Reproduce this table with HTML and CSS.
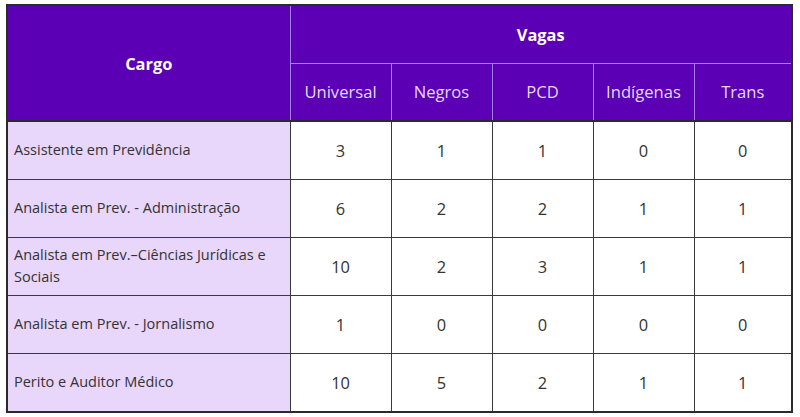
FILE: index.html
```html
<!DOCTYPE html>
<html lang="pt-BR">
<head>
<meta charset="utf-8">
<title>Vagas</title>
<link rel="stylesheet" href="styles.css">
</head>
<body>
<div class="wrap">
<table class="vagas">
  <colgroup>
    <col class="c-cargo">
    <col class="c-num"><col class="c-num"><col class="c-num"><col class="c-num"><col class="c-last">
  </colgroup>
  <thead>
    <tr class="h1">
      <th rowspan="2" class="th-main">Cargo</th>
      <th colspan="5" class="th-main">Vagas</th>
    </tr>
    <tr class="h2">
      <th>Universal</th>
      <th>Negros</th>
      <th>PCD</th>
      <th>Indígenas</th>
      <th>Trans</th>
    </tr>
  </thead>
  <tbody>
    <tr><td class="cargo">Assistente em Previdência</td><td>3</td><td>1</td><td>1</td><td>0</td><td>0</td></tr>
    <tr><td class="cargo">Analista em Prev. - Administração</td><td>6</td><td>2</td><td>2</td><td>1</td><td>1</td></tr>
    <tr><td class="cargo">Analista em Prev.–Ciências Jurídicas e Sociais</td><td>10</td><td>2</td><td>3</td><td>1</td><td>1</td></tr>
    <tr><td class="cargo">Analista em Prev. - Jornalismo</td><td>1</td><td>0</td><td>0</td><td>0</td><td>0</td></tr>
    <tr><td class="cargo">Perito e Auditor Médico</td><td>10</td><td>5</td><td>2</td><td>1</td><td>1</td></tr>
  </tbody>
</table>
</div>
</body>
</html>
```
FILE: styles.css
```css
html, body {
  margin: 0;
  padding: 0;
  background: #ffffff;
}
body {
  font-family: "Open Sans", "Noto Sans", sans-serif;
  color: #333333;
}
.wrap {
  margin: 4px 0 0 6px;
  width: 787px;
  border: 2px solid #2b2b2b;
  box-sizing: border-box;
}
.vagas {
  width: 100%;
  border-collapse: collapse;
  border-style: hidden;
  table-layout: fixed;
}
.c-cargo { width: 282px; }
.c-num { width: 101px; }
.c-last { width: 97px; }
.vagas th {
  background: #5b00b4;
  color: #ffffff;
  font-weight: 400;
  font-size: 16.6px;
  border: 1px solid #a57cf2;
  text-align: center;
  padding: 0;
}
.vagas .th-main {
  font-weight: 700;
  font-size: 16.4px;
}
.vagas .h2 th {
  color: #e4d8fb;
  border-bottom: 2px solid #2b2b2b;
}
.vagas .h1 .th-main[rowspan] {
  border-bottom: 2px solid #2b2b2b;
}
.vagas .h1 { height: 57px; }
.vagas .h2 { height: 58px; }
.vagas tbody tr { height: 58px; }
.vagas td {
  border: 1px solid #3a3a3a;
  text-align: center;
  font-size: 16.4px;
  color: #333333;
  padding: 0;
}
.vagas td.cargo {
  background: #e9d6fb;
  text-align: left;
  font-size: 14.5px;
  line-height: 22px;
  padding: 0 12px 0 6px;
}
```
